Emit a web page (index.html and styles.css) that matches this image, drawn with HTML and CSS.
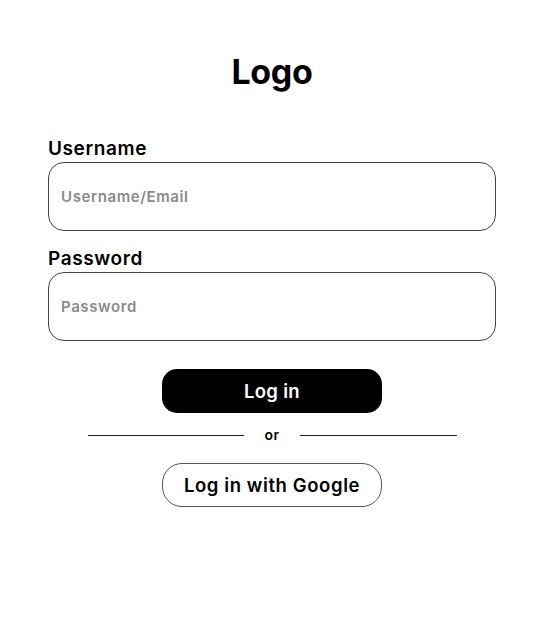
FILE: index.html
```html
<!DOCTYPE html>
<html lang="en">
<head>
<meta charset="utf-8">
<title>Log in</title>
<link rel="stylesheet" href="styles.css">
</head>
<body>
<main class="login">
  <h1 class="logo">Logo</h1>
  <form class="form">
    <label class="field">
      <span class="label">Username</span>
      <input class="input" type="text" placeholder="Username/Email">
    </label>
    <label class="field">
      <span class="label">Password</span>
      <input class="input" type="password" placeholder="Password">
    </label>
    <div class="actions">
      <button class="btn btn-primary" type="button">Log in</button>
      <div class="divider"><span class="line"></span><span class="or">or</span><span class="line"></span></div>
      <button class="btn btn-outline" type="button">Log in with Google</button>
    </div>
  </form>
</main>
</body>
</html>
```
FILE: styles.css
```css
* { box-sizing: border-box; }
html, body { margin: 0; background: #fff; }
body {
  font-family: "Inter", "Noto Sans", sans-serif;
  color: #000;
}
.login {
  width: 448px;
  margin-left: 48px;
  padding-top: 50px;
}
.logo {
  margin: 0;
  text-align: center;
  font-size: 34px;
  font-weight: 700;
  line-height: 44px;
  letter-spacing: -0.3px;
}
.form {
  margin-top: 45px;
  display: flex;
  flex-direction: column;
}
.field {
  display: flex;
  flex-direction: column;
  margin-bottom: 18px;
}
.label {
  font-size: 19px;
  font-weight: 600;
  line-height: 20px;
  margin-bottom: 3px;
  letter-spacing: 0.6px;
}
.input {
  height: 69px;
  border: 1px solid #444;
  border-radius: 16px;
  padding: 0 12px;
  font-family: inherit;
  font-size: 15px;
  font-weight: 600;
  letter-spacing: 0.6px;
  color: #000;
  outline: none;
  background: #fff;
}
.input::placeholder { color: #8a8a8a; }
.actions {
  display: flex;
  flex-direction: column;
  align-items: center;
  margin-top: 10px;
}
.btn {
  width: 220px;
  height: 44px;
  font-family: inherit;
  font-size: 18.5px;
  font-weight: 600;
  cursor: pointer;
}
.btn-primary {
  background: #000;
  color: #fff;
  border: none;
  border-radius: 15px;
  letter-spacing: 0.3px;
}
.btn-outline {
  background: #fff;
  color: #000;
  border: 1px solid #555;
  border-radius: 20px;
  letter-spacing: 0.6px;
}
.divider {
  display: flex;
  align-items: center;
  width: 369px;
  margin: 12px 0 18px;
  gap: 20px;
}
.line { flex: 1; height: 1px; background: #222; }
.or { font-size: 14px; font-weight: 600; line-height: 20px; letter-spacing: 0.5px; }
```
